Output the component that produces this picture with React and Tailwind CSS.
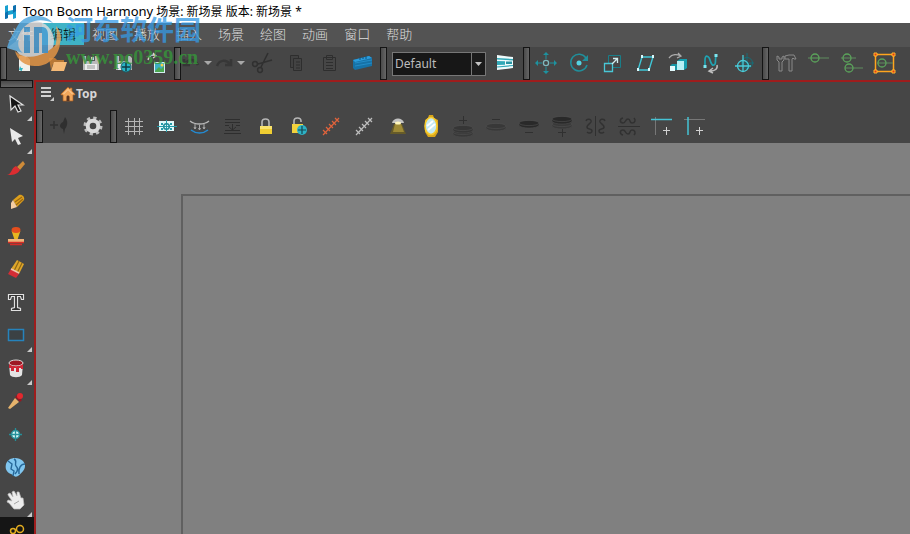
import { clsx } from "clsx";

const MENUS = ["文件", "编辑", "视图", "播放", "插入", "场景", "绘图", "动画", "窗口", "帮助"];

function Icon({ children }) {
  return (
    <svg viewBox="0 0 33 33" className="block size-[33px]" fill="none" aria-hidden="true">
      {children}
    </svg>
  );
}

function Handle({ className }) {
  return (
    <div
      className={clsx(
        "w-[7px] shrink-0 self-stretch border border-[#141414] bg-linear-to-r from-[#4a4a4a] to-[#666]",
        className
      )}
    />
  );
}

function ToolButton({ label, disabled, children }) {
  return (
    <button type="button" aria-label={label} disabled={disabled} className="size-[33px] shrink-0">
      <Icon>{children}</Icon>
    </button>
  );
}

function SideButton({ label, more, active, children }) {
  return (
    <button
      type="button"
      aria-label={label}
      className={clsx("relative h-[33px] w-full shrink-0", active && "bg-[#151515]")}
    >
      <Icon>{children}</Icon>
      {more && (
        <svg viewBox="0 0 5 5" className="absolute right-[2px] bottom-0 size-[5px]" aria-hidden="true">
          <path d="M5 0v5H0z" fill="#c9c9c9" />
        </svg>
      )}
    </button>
  );
}

function TitleBar() {
  return (
    <header className="flex h-[23px] shrink-0 items-center bg-white pl-[3px]">
      <svg viewBox="0 0 14 16" className="size-4" aria-hidden="true">
        <path d="M1 2l3-1v6l5-1V2l3-1v13l-3 1v-5l-5 1v3l-3 1z" fill="#18a0d0" />
        <path d="M1 9l3-2v7l-3 1zM9 2l3-1v6l-3 2z" fill="#0d6fae" />
      </svg>
      <h1 className="ml-1 text-[12px] whitespace-pre text-black">
        <span className="text-[13px]">Toon Boom Harmony</span> 场景: 新场景 版本: 新场景 *
      </h1>
    </header>
  );
}

function MenuBar() {
  return (
    <nav className="flex h-6 shrink-0 items-start bg-[#535353] text-[13px] text-[#dedede]">
      {MENUS.map((name) => (
        <button
          key={name}
          type="button"
          className={clsx("h-[22px] px-2 leading-[22px] font-light", name === "编辑" && "bg-[#3fb3c6] text-black")}
        >
          {name}
        </button>
      ))}
    </nav>
  );
}

function DropArrow() {
  return <path d="M23 14h8l-4 4z" fill="#a8a8a8" />;
}

function FileTools() {
  return (
    <>
      <Handle className="mr-px" />
      <ToolButton label="New">
        <path d="M11 9h7l4 4v11H11z" fill="#f1f1ec" />
        <path d="M18 9v4h4" fill="#c9c9c9" />
        <path d="M12 19l1 2 2 0-1 2v1l-3-1z" fill="#2bb5c4" />
      </ToolButton>
      <ToolButton label="Open">
        <path d="M8 11h6l2 2h7v4H12l-2 6z" fill="#b87836" />
        <path d="M13 15h13l-3 9H10z" fill="#f5b976" />
      </ToolButton>
      <ToolButton label="Save">
        <path d="M9 9h14l2 2v12H9z" fill="#b9b9b9" />
        <path d="M12 9h9v5h-9z" fill="#555" />
        <path d="M17 10h3v3h-3z" fill="#d6d6d6" />
        <path d="M11 17h12v6H11z" fill="#ededed" />
        <path d="M13 19h8M13 21h8" stroke="#999" />
      </ToolButton>
      <ToolButton label="Save as new version">
        <path d="M9 9h14l2 2v12H9z" fill="#b9b9b9" />
        <path d="M12 9h9v5h-9z" fill="#555" />
        <path d="M11 17h9v6h-9z" fill="#ededed" />
        <circle cx="19" cy="20" r="5" fill="#28b2c5" stroke="#195f69" />
        <path d="M19 16v8M15 20h8" stroke="#103c44" strokeWidth="1.5" />
      </ToolButton>
      <ToolButton label="Import">
        <path d="M8 13c1-5 5-6 8-4m-3-3l3 3-3 2" stroke="#d2d2d2" strokeWidth="1.3" />
        <path d="M14 15h11v11H14z" fill="#d3eef0" />
        <path d="M15 16h9v9h-9z" fill="#3dafc3" />
        <path d="M15 24l4-4 2 2 3-3v6h-9z" fill="#4ca750" />
        <circle cx="22" cy="18" r="1.5" fill="#f4d246" />
      </ToolButton>
    </>
  );
}

function EditTools() {
  return (
    <>
      <Handle className="ml-px" />
      <ToolButton label="Undo" disabled>
        <path d="M4 17c4-6 10-5 13 1M3 12v6h6" stroke="#363636" strokeWidth="2.5" />
        <DropArrow />
      </ToolButton>
      <ToolButton label="Redo" disabled>
        <path d="M3 19c2-6 9-7 13-2M17 12v6h-6" stroke="#373737" strokeWidth="2.5" />
        <DropArrow />
      </ToolButton>
      <ToolButton label="Cut" disabled>
        <path d="M21 6l-7 14M25 13l-14 4" stroke="#303030" strokeWidth="1.6" />
        <circle cx="8" cy="17" r="2.4" stroke="#303030" strokeWidth="1.5" />
        <circle cx="13" cy="23" r="2.4" stroke="#303030" strokeWidth="1.5" />
      </ToolButton>
      <ToolButton label="Copy" disabled>
        <path d="M10.5 8.5h8v12h-8z" fill="#414141" stroke="#2e2e2e" />
        <path d="M13.5 11.5h8v12h-8zM16 15h4M16 18h4M16 21h4" fill="#434343" stroke="#2e2e2e" />
      </ToolButton>
      <ToolButton label="Paste" disabled>
        <path d="M10.5 10.5h12v13h-12zM13.5 8.5h6v4h-6zM13 15.5h7M13 18.5h7M13 21.5h7" stroke="#2e2e2e" />
      </ToolButton>
      <ToolButton label="Flip book">
        <path d="M7 13l16-4 3 2v8L9 23l-2-2z" fill="#1672a7" />
        <path d="M7 13l16-4 3 2-17 4z" fill="#2b9cdc" />
        <path d="M9 16l17-3M9 19l17-3" stroke="#238cc7" />
        <path d="M14 10v3M17 10v2M20 9v3" stroke="#0e527c" />
      </ToolButton>
    </>
  );
}

function WorkspacePicker() {
  return (
    <>
      <Handle className="ml-px" />
      <div className="relative mr-[3px] ml-[5px] w-[94px] shrink-0 self-center">
        <select
          aria-label="Workspace"
          className="block h-6 w-full appearance-none border border-[#777] bg-[#171717] pl-[2px] text-[12px] text-[#bdbdbd]"
        >
          <option>Default</option>
        </select>
        <svg viewBox="0 0 15 24" className="pointer-events-none absolute top-0 right-0 h-6 w-[15px]" aria-hidden="true">
          <path d="M.5 .5h14v23H.5z" fill="#1b1b1b" stroke="#777" />
          <path d="M4 10h7l-3.500 4z" fill="#c4c4c4" />
        </svg>
      </div>
      <ToolButton label="Workspace manager">
        <path d="M8 8l16 2v11L8 23z" fill="#f0fbfc" />
        <path d="M8 11l16 1v1.500L8 12.500z" fill="#31a9b8" />
        <path d="M8 14l8 .3v3.500L8 18z" fill="#31a9b8" />
        <path d="M17 14.500h6v2.500h-6z" fill="#2795a3" />
        <path d="M8 20l16-1.500" stroke="#31a9b8" strokeWidth="1.200" />
      </ToolButton>
    </>
  );
}

function TransformTools() {
  return (
    <>
      <Handle className="ml-px" />
      <ToolButton label="Translate">
        <circle cx="16" cy="16" r="2.600" stroke="#7fb8bd" strokeWidth="1.300" />
        <path d="M16 6v6M16 20v6M6 16h6M20 16h6" stroke="#1d929f" />
        <path d="M16 5l3 3h-6zM16 27l3-3h-6zM5 16l3-3v6zM27 16l-3-3v6z" fill="#1d929f" />
      </ToolButton>
      <ToolButton label="Rotate">
        <path d="M23 11A8.300 8.300 0 1 0 24 18" stroke="#208f9b" strokeWidth="1.500" />
        <path d="M25 8v6h-6z" fill="#208f9b" />
        <circle cx="16" cy="16" r="2.500" fill="#55d3e2" />
      </ToolButton>
      <ToolButton label="Scale">
        <path d="M12.500 16V8.500h12v12H17" stroke="#197e89" />
        <path d="M8.500 16.500h8v8h-8z" stroke="#49c7d6" strokeWidth="1.300" />
        <path d="M16 17l5-5M17 11.500h4.500V16" stroke="#d1eef0" strokeWidth="1.300" />
      </ToolButton>
      <ToolButton label="Skew">
        <path d="M13 10h11l-4 13H9z" stroke="#3fc6d6" strokeWidth="1.400" />
        <path d="M12 8h2v3h-2zM23 8h2v3h-2zM8 21h2v3H8zM19 21h2v3h-2z" fill="#d9f8fb" />
      </ToolButton>
      <ToolButton label="Maintain size">
        <path d="M7 11c3-4 8-4 12-2m-3-3l3 3-4 2" stroke="#aaa" strokeWidth="1.300" />
        <path d="M15 14l3-2h7v9l-3 2h-7z" fill="#159eaf" />
        <path d="M15 14h7v9h-7z" fill="#b6f0f6" />
        <path d="M8 19l2-2h5v6H8z" fill="#1697a7" />
        <path d="M8 19h5v5H8z" fill="#e2fbfe" />
      </ToolButton>
      <ToolButton label="Spline offset">
        <path d="M10 20v-7c0-6 4-4 5 0 1 4 3 7 5 4 1-2 0-5 1-8" stroke="#20a3b2" strokeWidth="1.700" />
        <path d="M8.500 18h3v3h-3zM19.500 7h3v3h-3z" fill="#7de5ef" />
        <path d="M22 18c1 4-2 6-7 6m3-3l-4 3 4 2" stroke="#bdbdbd" strokeWidth="1.500" />
      </ToolButton>
      <ToolButton label="Pivot">
        <circle cx="19" cy="16" r="5.500" stroke="#176d77" />
        <path d="M19 6v15M14 16h12" stroke="#176d77" />
        <circle cx="15" cy="19" r="5.500" stroke="#48cbd9" strokeWidth="1.300" />
        <path d="M15 8v17M7 19h16" stroke="#48cbd9" strokeWidth="1.300" />
      </ToolButton>
    </>
  );
}

function RiggingTools() {
  return (
    <>
      <Handle className="ml-px" />
      <ToolButton label="Rigging tools">
        <path d="M8 9v4l2 2v9h3v-9l2-2V9l-2 1v2h-3v-2z" stroke="#898989" />
        <path d="M16 9l4-1h5l2 4h-2l-1-1-1 1v12h-3V12h-4z" stroke="#898989" />
      </ToolButton>
      <ToolButton label="Show control">
        <path d="M6 11h21" stroke="#5e8c5e" />
        <circle cx="13" cy="11" r="4" fill="#464646" stroke="#5ba45b" strokeWidth="1.300" />
        <path d="M9 11h8" stroke="#5ba45b" />
      </ToolButton>
      <ToolButton label="Show all controls">
        <path d="M6 11h15M10 21h18" stroke="#5e8c5e" />
        <circle cx="12" cy="11" r="4" stroke="#5ba45b" strokeWidth="1.300" />
        <circle cx="14" cy="21" r="4" stroke="#5ba45b" strokeWidth="1.300" />
      </ToolButton>
      <ToolButton label="Select control">
        <path d="M7.500 7.500h18v17h-18z" stroke="#ffa51e" strokeWidth="1.500" />
        <path d="M9 16h16" stroke="#5e8c5e" />
        <circle cx="14" cy="16" r="4" stroke="#5ba45b" strokeWidth="1.300" />
        <path
          d="M6 6h3v3H6zM24 6h3v3h-3zM6 23h3v3H6zM24 23h3v3h-3z"
          fill="#e53a16"
          stroke="#ffb52b"
        />
      </ToolButton>
    </>
  );
}

function Disc({ y, fill = "#292929" }) {
  return (
    <g transform={`translate(0 ${y})`}>
      <path d="M6 0v2c0 4 20 4 20 0V0z" fill={fill} stroke="#4c4c4c" strokeWidth=".6" />
      <ellipse cx="16" cy="0" rx="10" ry="2.600" fill={fill} stroke="#505050" strokeWidth=".6" />
    </g>
  );
}

function Ruler({ color }) {
  return (
    <path
      d="M8 25L24 8M8 20l4 4M11 17l4 4M14 14l4 4M17 11l4 4M20 8l4 4"
      stroke={color}
      strokeWidth="1.200"
    />
  );
}

function CameraTools() {
  return (
    <div className="flex h-[33px] shrink-0 overflow-hidden">
      <Handle className="mr-px" />
      <ToolButton label="Add drawing" disabled>
        <path d="M6 15h8M10 11v8" stroke="#323232" strokeWidth="1.500" />
        <path d="M21 7c3 4 3 8 0 12l-1 5-1-5c-4-1-4-5 0-7z" fill="#2f2f2f" />
      </ToolButton>
      <ToolButton label="Settings">
        <circle cx="16" cy="16" r="8" stroke="#bcbcbc" strokeWidth="3" strokeDasharray="3.200 3.083" />
        <circle cx="16" cy="16" r="5.300" stroke="#d9d9d9" strokeWidth="4" />
      </ToolButton>
      <Handle />
      <ToolButton label="Grid">
        <path d="M11.500 8v17M17.500 8v17M22.500 8v17M8 11.500h18M8 16.500h18M8 21.500h18" stroke="#b5b5b5" />
      </ToolButton>
      <ToolButton label="Camera mask">
        <path d="M9 11h15v10H9z" fill="#dff7f8" />
        <path d="M7 16.500h20M16.500 10v12" stroke="#229ba9" />
        <path d="M11 13h2v2h-2zM20 13h2v2h-2zM11 18h2v2h-2zM20 18h2v2h-2z" fill="#229ba9" />
        <circle cx="16.500" cy="16.500" r="2.800" stroke="#1c8b99" strokeWidth="1.500" />
      </ToolButton>
      <ToolButton label="Onion skin">
        <path d="M7 11c5 4 14 4 19 0" stroke="#b7b7b7" strokeWidth="1.300" />
        <path d="M12 14v5m-1-2l1 2 1-2M16.500 15v5m-1-2l1 2 1-2M21 14v5m-1-2l1 2 1-2" stroke="#aaa" />
        <path d="M8 20c5 4 12 4 17 0" stroke="#248bd3" strokeWidth="1.500" />
      </ToolButton>
      <ToolButton label="Outline" disabled>
        <path d="M9 9.500h15M9 12.500h15M9 15.500h4M20 15.500h4M8 23.500h17" stroke="#2e2e2e" />
        <path d="M16.500 14v6M13 17l3.500 3 3.500-3M9 20.500h15" stroke="#2e2e2e" />
      </ToolButton>
      <ToolButton label="Lock">
        <path d="M13 16v-4c0-4 7-4 7 0v4" stroke="#b6b6b6" strokeWidth="1.600" />
        <path d="M11 16h12v8H11z" fill="#f0ce32" />
        <path d="M11 16h12v3H11z" fill="#fae36c" />
      </ToolButton>
      <ToolButton label="Unlock">
        <path d="M12 15v-4c0-4 7-4 7 0v1" stroke="#b6b6b6" strokeWidth="1.600" />
        <path d="M10 14h11v9H10z" fill="#f2d13c" />
        <circle cx="20" cy="20" r="5" fill="#2db2c6" />
        <path d="M20 16v8M16 20h8" stroke="#154750" strokeWidth="1.200" />
      </ToolButton>
      <ToolButton label="Red ruler">
        <Ruler color="#e0633c" />
      </ToolButton>
      <ToolButton label="Grey ruler">
        <Ruler color="#bdbdbd" />
      </ToolButton>
      <ToolButton label="Light table">
        <path d="M13 14h8l4 10H9z" fill="#665b29" />
        <path d="M14 14h6l3 8H12z" fill="#9e8a37" />
        <path d="M11 13c1-6 11-6 12 0z" fill="#c2c2c2" />
        <ellipse cx="17" cy="13" rx="3" ry="1.500" fill="#fff7bd" />
      </ToolButton>
      <ToolButton label="Mirror view">
        <path d="M15 5h4l1 3 4 2v12l-3 5h-7l-3-5V10l3-2z" fill="#d8a51b" />
        <ellipse cx="17" cy="16" rx="6" ry="8.500" fill="#c5eaf3" stroke="#f6c92b" strokeWidth="1.600" />
        <path d="M13 16l6-5M14 20l7-6" stroke="#fff" strokeWidth="2" />
      </ToolButton>
      <ToolButton label="Add above" disabled>
        <path d="M16.500 6v8M12 10.500h8" stroke="#303030" />
        <Disc y={22} fill="#383838" />
        <Disc y={18} fill="#363636" />
      </ToolButton>
      <ToolButton label="Remove above" disabled>
        <path d="M12 9.500h8" stroke="#303030" />
        <Disc y={16} fill="#383838" />
      </ToolButton>
      <ToolButton label="Remove below" disabled>
        <Disc y={13} />
        <path d="M12 22.500h8" stroke="#303030" />
      </ToolButton>
      <ToolButton label="Add below" disabled>
        <Disc y={14} fill="#393939" />
        <Disc y={9} />
        <path d="M16.500 19v8M12 22.500h8" stroke="#303030" />
      </ToolButton>
      <ToolButton label="Flip horizontal" disabled>
        <path d="M16.500 6v20" stroke="#303030" />
        <path
          d="M7 11c1-3 6-2 5 1-1 2-4 3-4 5 0 3 5 1 5 4 0 2-3 3-5 1M26 11c-1-3-6-2-5 1 1 2 4 3 4 5 0 3-5 1-5 4 0 2 3 3 5 1"
          stroke="#313131"
          strokeWidth="1.500"
        />
      </ToolButton>
      <ToolButton label="Flip vertical" disabled>
        <path d="M6 16.500h22" stroke="#303030" />
        <path
          d="M11 8c-4 1-3 5 0 5 3 0 2-4 5-4s1 4 4 4 4-3 2-5M11 25c-4-1-3-5 0-5 3 0 2 4 5 4s1-4 4-4 4 3 2 5"
          stroke="#313131"
          strokeWidth="1.500"
        />
      </ToolButton>
      <ToolButton label="Horizontal guide">
        <path d="M10.500 7v18" stroke="#777" />
        <path d="M6 9.500h21" stroke="#45c4d6" strokeWidth="1.500" />
        <path d="M21.500 17v8M18 20.500h7" stroke="#d2d2d2" />
      </ToolButton>
      <ToolButton label="Vertical guide">
        <path d="M6 9.500h21" stroke="#777" />
        <path d="M10 7v18" stroke="#45c4d6" strokeWidth="1.500" />
        <path d="M21.500 17v8M18 20.500h7" stroke="#d2d2d2" />
      </ToolButton>
    </div>
  );
}

function SideBar() {
  return (
    <aside className="flex w-[34px] shrink-0 flex-col overflow-hidden">
      <div className="h-2 w-[33px] shrink-0 border border-[#141414] bg-linear-to-b from-[#4a4a4a] to-[#666]" />
      <SideButton label="Transform" more>
        <path d="M10 8l1 14 4-4 3 6 3-1-3-6h5z" fill="#161616" stroke="#e2e2e2" strokeWidth="1.200" />
      </SideButton>
      <SideButton label="Select" more>
        <path d="M10 7l2 14 3-3 3 6 3-1-3-6 5-2z" fill="#e9e9e9" />
      </SideButton>
      <SideButton label="Brush">
        <path d="M17 13l6-6 2 3-5 6z" fill="#cf8b38" />
        <path d="M16 12l4 4c-3 5-8 5-13 5 5-1 4-7 9-9z" fill="#dc2d31" />
      </SideButton>
      <SideButton label="Pencil">
        <path d="M13 13l6-5c3-1 6 2 5 5l-7 7z" fill="#dda01c" />
        <path d="M15 15l7-5M16 18l7-6" stroke="#9b6613" strokeWidth="1.200" />
        <path d="M13 13l4 7-6 2v-6z" fill="#f6cea2" />
      </SideButton>
      <SideButton label="Stamp">
        <path d="M13 12h6l-2 6h-2z" fill="#e8b621" stroke="#e8b621" strokeWidth="2" />
        <ellipse cx="16" cy="10" rx="4.500" ry="3" fill="#e54e1d" />
        <path d="M8 19h16v3H8z" fill="#f0b57a" />
        <path d="M8 22.500h16M10 24.500h12" stroke="#d62c27" strokeWidth="1.500" />
      </SideButton>
      <SideButton label="Eraser">
        <path d="M17 7l7 4-5 10-8-5z" fill="#dfa629" />
        <path d="M19 8l-5 10M22 10l-5 10" stroke="#8e6716" strokeWidth="1.200" />
        <path d="M11 16l8 5-3 4-8-4z" fill="#d42d35" />
        <path d="M11 16l8 4" stroke="#f0c5ae" strokeWidth="1.500" />
      </SideButton>
      <SideButton label="Text">
        <path
          d="M8.500 8.500h15v5h-2l-1-3h-3v11l3 1v2h-9v-2l3-1v-11h-3l-1 3h-2z"
          fill="#333"
          stroke="#e1e1e1"
          strokeWidth="1.200"
        />
      </SideButton>
      <SideButton label="Rectangle" more>
        <path d="M8.500 10.500h15v11h-15z" fill="#3b4144" stroke="#2683bc" strokeWidth="1.500" />
      </SideButton>
      <SideButton label="Paint" more>
        <path d="M9 12h14l-1 11c-2 3-10 3-12 0z" fill="#e3e3e3" />
        <ellipse cx="16" cy="11" rx="7" ry="3" fill="#9e1823" stroke="#d9d9d9" />
        <path d="M9 12c4 3 10 3 14 0v5h-2v-1h-2v4h-3v-4h-2v3h-3v-3H9z" fill="#cf2635" />
      </SideButton>
      <SideButton label="Dropper">
        <path d="M15 13l4 4-9 7-2-1z" fill="#e6b36c" />
        <path d="M16 11l5 5" stroke="#961821" strokeWidth="3" />
        <circle cx="20" cy="11" r="3" fill="#e3282e" />
      </SideButton>
      <SideButton label="Pivot point">
        <circle cx="15.500" cy="16.500" r="4" fill="#d5f5f6" stroke="#258f99" strokeWidth="1.500" />
        <path d="M15.500 10v13M9 16.500h13" stroke="#258f99" strokeWidth="1.300" />
      </SideButton>
      <SideButton label="Morphing">
        <path d="M6 13c2-7 12-8 17-3 5 6 0 11-5 15-4 2-4-1-7-2-5-2-6-6-5-10z" fill="#80c6ef" />
        <path d="M8 10l4 3-1 5 3 2-1 5M14 8c4 2 0 5 2 7s2 5-1 8M25 13c-4 0-7 4-6 10" stroke="#26689a" strokeWidth="1.400" />
      </SideButton>
      <SideButton label="Hand" more>
        <path
          d="M8 10l2-1 3 4-1-5 2-1 3 5v-4h2l2 6 2 0 1 7-4 4h-6l-5-6-2-1 1-2 4 1-4-6z"
          fill="#ececec"
          stroke="#bdbdbd"
          strokeWidth=".7"
        />
        <path d="M14 20l5-3" stroke="#a5a5a5" />
      </SideButton>
      <SideButton label="Rigging" active>
        <circle cx="20" cy="12" r="3.500" stroke="#e2ac20" strokeWidth="1.500" />
        <circle cx="13" cy="14" r="2.500" stroke="#e2ac20" strokeWidth="1.500" />
        <path d="M10 21c3-5 6-3 9-3s4 4 2 5" stroke="#e2ac20" strokeWidth="1.500" />
      </SideButton>
    </aside>
  );
}

function CameraView() {
  return (
    <main className="flex min-w-0 flex-1 flex-col border-t-2 border-l-2 border-[#9e1d1d]">
      <div className="flex h-7 shrink-0 items-start pt-[3px] pl-1">
        <button type="button" aria-label="View menu">
          <svg viewBox="0 0 16 18" className="h-[18px] w-4" aria-hidden="true">
            <path d="M1 3h10M1 7h10M1 11h10" stroke="#d2d2d2" strokeWidth="2" />
            <path d="M14 12v4h-4z" fill="#c9c9c9" />
          </svg>
        </button>
        <a href="#top" className="ml-1 flex items-center text-[12px] leading-[18px] font-bold text-[#d6d6d6]">
          <svg viewBox="0 0 16 16" className="size-4" aria-hidden="true">
            <path d="M8 1L1 8v1h2v6h10V9h2V8l-3-3V2h-2v1z" fill="#f1a75c" stroke="#a65b20" strokeWidth=".7" />
            <path d="M6.500 15v-4c0-2 3-2 3 0v4z" fill="#5b3520" />
            <path d="M3.500 8L8 3.500 12.500 8" stroke="#ffd6a6" fill="none" />
          </svg>
          Top
        </a>
      </div>
      <CameraTools />
      <div className="flex min-h-0 flex-1 bg-[#808080] pt-[51px] pl-[145px]">
        <div className="flex-1 border-t-2 border-l-2 border-[#606060]" />
      </div>
    </main>
  );
}

function Watermark() {
  return (
    <div className="pointer-events-none absolute top-[14px] left-[6px] flex items-start gap-1 whitespace-nowrap">
      <svg viewBox="0 0 56 54" className="h-[54px] w-14" fill="none" opacity=".85" aria-hidden="true">
        <circle cx="28" cy="27" r="20" fill="#d9dadb" />
        <path d="M1 34C3 25 9 17 12 11 20-1 38-1 47 9c-13-6-26-2-32 8-3 5-4 9-6 13z" fill="#55a9df" />
        <path d="M1 34L13 25c-2 6 0 11 4 14z" fill="#6fb9e6" />
        <path d="M9 37c9 9 29 9 45-11 1 14-11 27-25 26-10 0-18-6-20-15z" fill="#e39545" />
        <path d="M50 12c5 6 6 12 4 17l-5 5c2-8 2-15 1-22z" fill="#e8a55d" />
        <path d="M18 21h6v18h-6zM18 13h6v5h-6z" fill="#4d9ed4" />
        <path d="M28 13h9c4 1 5 4 5 8v18h-6V19h-3v20h-5z" fill="#4d9ed4" />
      </svg>
      <div className="font-bold">
        <p className="text-[27px] leading-8 text-[#359ae6] opacity-75">河东软件园</p>
        <p className="font-['Liberation_Serif','Noto_Sans_CJK_SC',serif] text-[20px] leading-[22px] text-[#36973a] opacity-80">
          www.pc0359.cn
        </p>
      </div>
    </div>
  );
}

export default function App() {
  return (
    <div className="relative isolate flex h-screen flex-col overflow-hidden bg-[#464646] font-['Noto_Sans','Noto_Sans_CJK_SC',sans-serif]">
      <TitleBar />
      <MenuBar />
      <div className="flex h-[33px] shrink-0 overflow-hidden">
        <FileTools />
        <EditTools />
        <WorkspacePicker />
        <TransformTools />
        <RiggingTools />
      </div>
      <div className="flex min-h-0 flex-1">
        <SideBar />
        <CameraView />
      </div>
      <Watermark />
    </div>
  );
}
